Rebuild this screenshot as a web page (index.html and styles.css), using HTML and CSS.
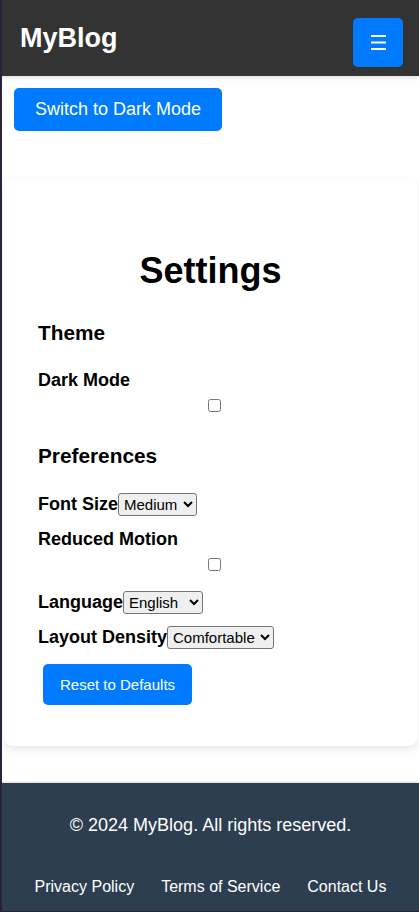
FILE: index.html
```html
<!DOCTYPE html>
<html lang="en">
<head>
<meta charset="utf-8">
<title>MyBlog - Settings</title>
<link rel="stylesheet" href="styles.css">
</head>
<body>
<header class="site-header">
  <div class="logo">MyBlog</div>
  <button class="menu-toggle" aria-label="Menu">
    <svg class="menu-icon" width="15" height="15" viewBox="0 0 15 15" aria-hidden="true">
      <rect x="0" y="0" width="15" height="2" fill="#fff"/>
      <rect x="0" y="6.5" width="15" height="2" fill="#fff"/>
      <rect x="0" y="13" width="15" height="2" fill="#fff"/>
    </svg>
  </button>
</header>

<button class="theme-toggle">Switch to Dark Mode</button>

<main class="settings-card">
  <h1 class="settings-title">Settings</h1>

  <section class="settings-section">
    <h2 class="section-title">Theme</h2>
    <div class="setting-item setting-check item-dark">
      <label class="setting-label" for="dark-mode">Dark Mode</label>
      <input class="setting-checkbox" type="checkbox" id="dark-mode">
    </div>
  </section>

  <section class="settings-section">
    <h2 class="section-title section-prefs">Preferences</h2>
    <div class="setting-item setting-inline item-font">
      <label class="setting-label" for="font-size">Font Size</label><select class="setting-select" id="font-size">
        <option>Small</option>
        <option selected>Medium</option>
        <option>Large</option>
      </select>
    </div>
    <div class="setting-item setting-check item-motion">
      <label class="setting-label" for="reduced-motion">Reduced Motion</label>
      <input class="setting-checkbox" type="checkbox" id="reduced-motion">
    </div>
    <div class="setting-item setting-inline item-lang">
      <label class="setting-label" for="language">Language</label><select class="setting-select" id="language">
        <option selected>English</option>
        <option>Spanish</option>
        <option>French</option>
      </select>
    </div>
    <div class="setting-item setting-inline item-density">
      <label class="setting-label" for="density">Layout Density</label><select class="setting-select" id="density">
        <option selected>Comfortable</option>
        <option>Compact</option>
      </select>
    </div>
  </section>

  <button class="reset-btn">Reset to Defaults</button>
</main>

<footer class="site-footer">
  <p class="copyright">© 2024 MyBlog. All rights reserved.</p>
  <nav class="footer-links">
    <a href="#">Privacy Policy</a>
    <a href="#">Terms of Service</a>
    <a href="#">Contact Us</a>
  </nav>
</footer>
</body>
</html>
```

FILE: styles.css
```css
html {
  background: #2b2238;
}

body {
  margin: 0 0 1px 2px;
  background: #ffffff;
  font-family: "Liberation Sans", Arial, sans-serif;
  color: #000;
}

/* Header */
.site-header {
  height: 76px;
  box-sizing: border-box;
  background: #333333;
  display: flex;
  align-items: center;
  justify-content: space-between;
  padding: 0 16px 0 18px;
  box-shadow: 0 2px 4px rgba(0, 0, 0, 0.12);
  position: relative;
  z-index: 1;
}

.logo {
  color: #fff;
  font-size: 27px;
  font-weight: bold;
  line-height: 32px;
}

.menu-toggle {
  width: 50px;
  height: 49px;
  margin-top: 9px;
  border: none;
  border-radius: 5px;
  background: #007bff;
  display: flex;
  align-items: center;
  justify-content: center;
  padding: 0;
}

.menu-icon {
  display: block;
}

/* Theme toggle */
.theme-toggle {
  display: block;
  margin: 12px 0 0 12px;
  padding: 11px 21px;
  border: none;
  border-radius: 5px;
  background: #007bff;
  color: #fff;
  font-family: "Liberation Sans", Arial, sans-serif;
  font-size: 18px;
  line-height: 21px;
}

/* Settings card */
.settings-card {
  display: block;
  margin: 47px 1px 0 1px;
  padding: 32px 35px 41px;
  background: #fff;
  border-radius: 10px;
  box-shadow: 0 4px 8px rgba(0, 0, 0, 0.09);
}

.settings-title {
  margin: 40px 0 0;
  font-size: 36px;
  line-height: 42px;
  text-align: center;
}

.section-title {
  margin: 27px 0 0;
  font-size: 20.8px;
  line-height: 27px;
}

.section-prefs {
  margin-top: 30px;
}

.setting-label {
  font-size: 18px;
  font-weight: bold;
  line-height: 21px;
}

.setting-check {
  display: flex;
  flex-direction: column;
  align-items: flex-start;
}

.setting-checkbox {
  display: block;
  width: 100%;
  height: 13px;
  margin: 8px 0 0 4px;
}

.setting-inline {
  display: flex;
  align-items: baseline;
  height: 21px;
}

.setting-select {
  font-family: "Liberation Sans", Arial, sans-serif;
  font-size: 15px;
  color: #000;
  padding: 1px 2px 1px 1px;
  border-radius: 3px;
}

.item-dark {
  margin-top: 24px;
}

.item-font {
  margin-top: 24px;
}

.item-motion {
  margin-top: 15px;
}

.item-lang {
  margin-top: 20px;
}

.item-density {
  margin-top: 14px;
}

.reset-btn {
  display: block;
  margin: 17px 0 0 5px;
  padding: 12px 17px;
  border: none;
  border-radius: 5px;
  background: #007bff;
  color: #fff;
  font-family: "Liberation Sans", Arial, sans-serif;
  font-size: 15px;
  line-height: 17px;
}

/* Footer */
.site-footer {
  margin-top: 37px;
  padding: 32px 0 15px;
  background: #2c3e50;
  color: #fff;
  text-align: center;
  box-shadow: 0 -1px 2px rgba(0, 0, 0, 0.15);
}

.copyright {
  margin: 0 0 42px;
  font-size: 18px;
  line-height: 21px;
}

.footer-links {
  display: flex;
  justify-content: center;
  gap: 27px;
  font-size: 16px;
  line-height: 18px;
}

.footer-links a {
  color: #fff;
  text-decoration: none;
}
```
